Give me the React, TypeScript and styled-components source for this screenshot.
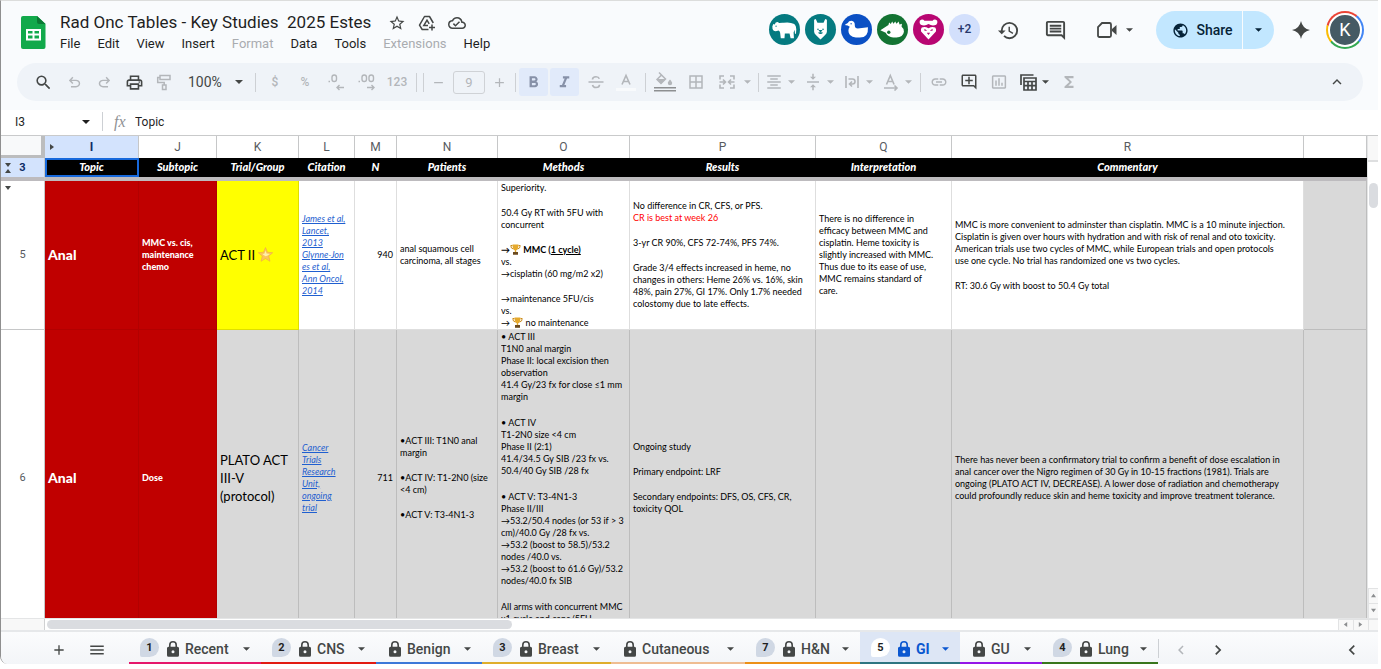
import React from "react";
import styled, { createGlobalStyle, css } from "styled-components";
import {
  MdStarBorder, MdOutlineCloudDone, MdHistory, MdOutlineComment,
  MdPublic, MdSearch, MdOutlinePrint, MdFormatBold, MdFormatItalic, MdBorderAll,
  MdFormatAlignCenter, MdVerticalAlignCenter, MdLink, MdOutlineAddComment,
  MdInsertChartOutlined, MdFunctions, MdAdd, MdRemove, MdMenu,
  MdChevronLeft, MdChevronRight, MdKeyboardArrowUp,
} from "react-icons/md";

const UI = `Roboto, "Liberation Sans", sans-serif`;
const SHEET = `Lato, "Open Sans", "DejaVu Sans", sans-serif`;
const INK = "#444746";
const FAINT = "#b3b6ba";

const GlobalStyle = createGlobalStyle`
  *, *::before, *::after { box-sizing: border-box; }
  body { margin: 0; background: #fff; font-family: ${UI}; color: #1f1f1f; }
  button, input, select { font: inherit; color: inherit; border: 0; padding: 0; margin: 0; background: none; border-radius: 0; outline: 0; }
  svg { display: block; flex: none; }
`;

/* ---------- frame ---------- */

const Page = styled.div`
  height: 100vh;
  padding: 0 3px 5px 0;
`;
const Window = styled.div`
  height: 100%;
  display: flex;
  flex-direction: column;
  overflow: hidden;
  border-left: 1px solid #8f8f8f;
  border-top: 1px solid #dcdddc;
  border-bottom-left-radius: 8px;
  background: #f9fbfd;
`;

/* ---------- title bar ---------- */

const TitleBar = styled.header`
  flex: none;
  height: 62px;
  display: flex;
  align-items: flex-start;
  padding: 10px 14px 0 20px;
`;
const Logo = styled.a`
  display: block;
  margin-top: 5px;
`;
const TitleBlock = styled.div`
  flex: 1;
  margin-left: 6px;
`;
const TitleRow = styled.div`
  display: flex;
  align-items: center;
  height: 23px;
  padding-left: 8px;
`;
const Title = styled.h1`
  margin: 0 11px 0 0;
  font: 400 17px/23px ${UI};
  white-space: pre;
`;
const TitleIcon = styled.button`
  width: 30px;
  display: flex;
  justify-content: center;
  color: ${INK};
`;
const MenuRow = styled.nav`
  display: flex;
  gap: 1px;
  height: 20px;
`;
const MenuItem = styled.button<{ $off?: boolean }>`
  padding: 0 8px;
  font: 400 13px/20px ${UI};
  color: ${(p) => (p.$off ? "#a9acb0" : "#1f1f1f")};
`;
const Viewers = styled.div`
  display: flex;
  gap: 5px;
  padding-top: 3px;
`;
const Viewer = styled.span<{ $bg: string }>`
  width: 31px;
  height: 31px;
  border-radius: 50%;
  overflow: hidden;
  background: ${(p) => p.$bg};
  font: 500 12px/31px ${UI};
  text-align: center;
  color: #27376b;
`;
const HeadTools = styled.div`
  display: flex;
  padding: 0 6px 0 5px;
`;
const HeadButton = styled.button<{ $w: number }>`
  width: ${(p) => p.$w}px;
  height: 38px;
  display: flex;
  align-items: center;
  justify-content: center;
  gap: 9px;
  color: ${INK};
`;
const ShareGroup = styled.div`
  display: flex;
  gap: 1px;
  height: 38px;
  border-radius: 19px;
  overflow: hidden;
  margin-right: 9px;
`;
const ShareButton = styled.button<{ $w: number }>`
  width: ${(p) => p.$w}px;
  display: flex;
  align-items: center;
  justify-content: center;
  gap: 7px;
  background: #c2e7ff;
  color: #062338;
  font: 500 14px/20px ${UI};
  &:first-child { padding-left: 7px; }
`;
const Profile = styled.button`
  width: 38px;
  height: 38px;
  margin-left: 8px;
  display: grid;
  place-items: center;
  border-radius: 50%;
  background: conic-gradient(from 315deg, #ea4335 0 85deg, #4285f4 85deg 175deg, #34a853 175deg 275deg, #fbbc04 275deg 330deg, #ea4335 330deg);
`;
const ProfileFace = styled.span`
  width: 34px;
  height: 34px;
  border: 2px solid #fff;
  border-radius: 50%;
  background: #455a64;
  color: #fff;
  font: 400 18px/30px ${UI};
`;

/* ---------- tool bar ---------- */

const ToolBar = styled.div`
  flex: none;
  height: 38px;
  margin: 0 15px 9px 16px;
  padding: 0 11px 0 10px;
  display: flex;
  align-items: center;
  border-radius: 19px;
  background: #eff3f8;
`;
const Tool = styled.button<{ $w?: number; $on?: boolean; $dark?: boolean; $gap?: number }>`
  width: ${(p) => p.$w ?? 30}px;
  height: 28px;
  flex: none;
  display: flex;
  align-items: center;
  justify-content: center;
  gap: ${(p) => p.$gap ?? 5}px;
  border-radius: 3px;
  color: ${(p) => (p.$dark ? INK : FAINT)};
  font: 500 12px/16px ${UI};
  ${(p) => p.$on && css`
    width: 29px;
    margin-right: 2px;
    background: #e1eafa;
    color: #8791a8;
  `}
`;
const Divider = styled.span<{ $l: number; $r: number }>`
  width: 1px;
  height: 19px;
  flex: none;
  margin: 0 ${(p) => p.$r}px 0 ${(p) => p.$l}px;
  background: #cdd0d4;
`;
const ZoomBox = styled.label`
  position: relative;
  width: 68px;
  flex: none;
  color: ${INK};
`;
const ZoomSelect = styled.select`
  appearance: none;
  width: 100%;
  padding-left: 9px;
  font: 400 14px/20px ${UI};
`;
const ZoomCaret = styled.span`
  position: absolute;
  right: 4px;
  top: 8px;
  pointer-events: none;
`;
const SizeInput = styled.input`
  width: 32px;
  height: 23px;
  flex: none;
  border: 1px solid #cfd2d6;
  border-radius: 3px;
  text-align: center;
  color: ${FAINT};
  font: 400 13px/20px ${UI};
`;
const Spring = styled.span`
  flex: 1;
`;

/* ---------- formula bar ---------- */

const FormulaBar = styled.div`
  flex: none;
  height: 26px;
  padding-bottom: 2px;
  display: flex;
  align-items: center;
  background: #fff;
  border-bottom: 1px solid #c9cacb;
`;
const NameInput = styled.input`
  width: 67px;
  margin-left: 14px;
  font: 400 12px/16px ${UI};
`;
const Fx = styled.span`
  width: 32px;
  padding-left: 11px;
  font: italic 400 16px/20px "Liberation Serif", serif;
  color: #8f9194;
`;
const FormulaInput = styled.input`
  flex: 1;
  font: 400 12px/16px ${UI};
`;

/* ---------- grid ---------- */

const GridArea = styled.div`
  flex: 1;
  min-height: 0;
  display: flex;
  background: #fff;
`;
const GridView = styled.div`
  flex: 1;
  min-width: 0;
  overflow: hidden;
`;
const Sheet = styled.table`
  width: 100%;
  table-layout: fixed;
  border-collapse: separate;
  border-spacing: 0;
`;
const Corner = styled.td`
  height: 22px;
  padding: 0;
  background: #f8f9fa;
  border: solid #bcbdbe;
  border-width: 0 4px 3px 0;
`;
const ColHead = styled.th<{ $on?: boolean }>`
  position: relative;
  height: 22px;
  padding: 0;
  border-right: 1px solid #c6c7c8;
  background: ${(p) => (p.$on ? "#d3e3fd" : "#fff")};
  color: ${(p) => (p.$on ? "#0b2a66" : "#575b5f")};
  font: ${(p) => (p.$on ? 700 : 400)} 12px/16px ${UI};
`;
const RowHead = styled.th<{ $on?: boolean }>`
  position: relative;
  padding: 0;
  border-right: 1px solid #c6c7c8;
  border-bottom: ${(p) => (p.$on ? "4px solid #bdbbbe" : "1px solid #c6c7c8")};
  background: ${(p) => (p.$on ? "#d3e3fd" : "#fff")};
  color: ${(p) => (p.$on ? "#0b2a66" : "#575b5f")};
  font: ${(p) => (p.$on ? 700 : 400)} 11px/16px ${UI};
`;
const GroupMark = styled.span<{ $top: number; $left: number }>`
  position: absolute;
  left: ${(p) => p.$left}px;
  top: ${(p) => p.$top}px;
  color: ${INK};
`;
const Field = styled.th<{ $picked?: boolean }>`
  height: 23px;
  padding: 0 1px 1px 0;
  background: #000;
  color: #fff;
  border-bottom: 4px solid #bdbbbe;
  font: italic 900 11px/12px ${SHEET};
  white-space: nowrap;
  ${(p) => p.$picked && css`
    box-shadow: inset 0 0 0 2px #1769dc;
  `}
`;
const Cell = styled.td<{ $h: number; $bg: string; $align?: string; $rule?: string }>`
  height: ${(p) => p.$h}px;
  padding: 0 3px;
  vertical-align: middle;
  text-align: ${(p) => p.$align ?? "left"};
  background: ${(p) => p.$bg};
  border: solid rgba(0, 0, 0, 0.13);
  border-width: 0 1px 1px 0;
  border-color: ${(p) => p.$rule};
  color: #000;
  font: 400 9px/12px ${SHEET};
  white-space: pre;
`;
const Para = styled.p`
  margin: 0;
  & + & { margin-top: 13px; }
`;
const Clip = styled.div<{ $h: number; $gap: number }>`
  height: ${(p) => p.$h}px;
  padding-top: 1px;
  overflow: hidden;
  ${Para} + ${Para} { margin-top: ${(p) => p.$gap}px; }
`;
const Topic = styled.strong`
  color: #fff;
  font: 900 14px/18px ${SHEET};
`;
const Subtopic = styled.strong`
  color: #fff;
  font: 900 9px/12px ${SHEET};
`;
const Trial = styled.span`
  display: block;
  color: #000;
  font: 400 13px/18px ${SHEET};
`;
const Cite = styled.a`
  color: #1f5fd0;
  font-style: italic;
  text-decoration: underline;
`;
const Red = styled.span`
  color: #f00;
`;
const Emoji = styled.svg`
  display: inline-block;
  vertical-align: -2px;
`;

/* ---------- scroll bars ---------- */

const VScroll = styled.div`
  width: 11px;
  flex: none;
  display: flex;
  flex-direction: column;
  border-left: 1px solid #e4e5e6;
`;
const VHead = styled.div`
  height: 26px;
  background: #f8f8f8;
  border-bottom: 2px solid #dedfe0;
`;
const VTrack = styled.div`
  flex: 1;
  padding: 21px 0 0 1px;
`;
const VThumb = styled.div`
  width: 9px;
  height: 25px;
  border-radius: 5px;
  background: #dadce0;
`;
const ScrollButton = styled.button<{ $w: number; $h: number }>`
  width: ${(p) => p.$w}px;
  height: ${(p) => p.$h}px;
  display: grid;
  place-items: center;
  background: #f8f8f8;
  box-shadow: inset 1px 1px 0 #e2e3e4;
  color: #8c8e90;
`;
const HScroll = styled.div`
  flex: none;
  height: 14px;
  display: flex;
  background: #fff;
  border-top: 1px solid #e4e5e6;
  border-bottom: 2px solid #e6e8ea;
`;
const HHead = styled.div`
  width: 44px;
  background: #f8f8f8;
  border-right: 1px solid #d0d1d2;
`;
const HTrack = styled.div`
  flex: 1;
  padding: 1px 0 0 2px;
`;
const HThumb = styled.div`
  width: 36%;
  height: 9px;
  border-radius: 5px;
  background: #dadce0;
`;

/* ---------- sheet tabs ---------- */

const TabBar = styled.footer`
  flex: none;
  height: 32px;
  display: flex;
  align-items: stretch;
  padding-left: 38px;
  background: linear-gradient(#fbfcfd, #f3f5f8);
`;
const TabList = styled.div`
  display: flex;
  margin-left: 14px;
`;
const BarButton = styled.button<{ $w: number; $off?: boolean }>`
  width: ${(p) => p.$w}px;
  flex: none;
  display: grid;
  place-items: center;
  padding-top: 3px;
  color: ${(p) => (p.$off ? FAINT : INK)};
`;
const Tab = styled.button<{ $w: number; $line: string; $on?: boolean }>`
  width: ${(p) => p.$w}px;
  flex: none;
  display: flex;
  align-items: center;
  padding: 4px 11px 0;
  border-bottom: 2px solid ${(p) => p.$line};
  background: ${(p) => (p.$on ? "#dde6f5" : "transparent")};
  color: ${(p) => (p.$on ? "#0b57d0" : INK)};
  font: ${(p) => (p.$on ? 700 : 500)} 14px/20px ${UI};
`;
const Badge = styled.span<{ $on?: boolean }>`
  width: 19px;
  height: 19px;
  margin: 0 6px 3px 0;
  border-radius: 10px 10px 10px 2px;
  background: ${(p) => (p.$on ? "#fff" : "#d0d8e4")};
  color: #1f1f1f;
  font: 700 11px/19px ${UI};
  text-align: center;
`;
const TabLabel = styled.span`
  flex: 1;
  margin-left: 4px;
  text-align: left;
`;
const TabEnd = styled.span`
  width: 1px;
  height: 19px;
  margin: 7px 6px 0 0;
  background: #cdd0d4;
`;

/* ---------- drawings ---------- */

const Caret = ({ w = 8 }: { w?: number }) => (
  <svg width={w} height="4" viewBox="0 0 8 4" aria-hidden="true"><path d="M0 0h8L4 4z" fill="currentColor" /></svg>
);
const Arrow = ({ dir, size = 6 }: { dir: "up" | "down" | "left" | "right"; size?: number }) => {
  const d = { up: "M0 5h6L3 1z", down: "M0 1h6L3 5z", left: "M5 0v6L1 3z", right: "M1 0v6l4-3z" }[dir];
  return <svg width={size} height={size} viewBox="0 0 6 6" aria-hidden="true"><path d={d} fill="currentColor" /></svg>;
};
const Symbol = ({ d, size = 17 }: { d: string; size?: number }) => (
  <svg width={size} height={size} viewBox="0 -960 960 960" fill="currentColor" aria-hidden="true"><path d={d} /></svg>
);
const UNDO = "M280-200v-80h284q63 0 109.500-40T720-420q0-60-46.500-100T564-560H312l104 104-56 56-200-200 200-200 56 56-104 104h252q97 0 169.500 63T800-420q0 94-72.500 157T564-200H280Z";
const REDO = "M396-200q-97 0-169.500-63T154-420q0-94 72.500-157T396-640h252L544-744l56-56 200 200-200 200-56-56 104-104H396q-63 0-109.500 40T240-420q0 60 46.500 100T396-280h284v80H396Z";

const Stroke = ({ children, w = 18, sw = 1.6 }: { children: React.ReactNode; w?: number; sw?: number }) => (
  <svg width={w} height="18" viewBox={`0 0 ${w} 18`} fill="none" stroke="currentColor" strokeWidth={sw} aria-hidden="true">{children}</svg>
);
const DriveAddIcon = () => (
  <Stroke sw={1.5}>
    <path d="M10.500 15.500H4.200L1.500 11.200 6.500 2.500h5l3.800 6.500" strokeLinejoin="round" />
    <path d="M10 11.500H5.800L9 6.200l2.200 3.600M14 10.500v6M11 13.500h6" />
  </Stroke>
);
const PaintIcon = () => (
  <Stroke sw={1.5}><path d="M5 2.500h10v4H5zM5 4.500H2.700v5h6.500V12M7.500 12h3.500v4.500H7.500z" /></Stroke>
);
const LessDecimals = () => (
  <Stroke sw={1.4}><path d="M10 14.500h7M12.500 12l-2.500 2.500 2.500 2.500M1.500 8.500h1.500" /><rect x="5" y="2" width="4.500" height="6.500" rx="2.200" /></Stroke>
);
const MoreDecimals = () => (
  <Stroke sw={1.4}><path d="M9 14.500h7M13.500 12l2.500 2.500-2.500 2.500M0.500 8.500H2" /><rect x="4" y="2" width="4.500" height="6.500" rx="2.200" /><rect x="11" y="2" width="4.500" height="6.500" rx="2.200" /></Stroke>
);
const StrikeIcon = () => (
  <Stroke sw={1.6}><path d="M1.500 9h15M5.500 6.500Q5.500 3.800 9 3.800q2.600 0 3.300 2M5.500 12q.6 2.500 3.500 2.500 3.500 0 3.500-2.700" /></Stroke>
);
const TextColor = () => (
  <svg width="22" height="22" viewBox="0 0 22 22" aria-hidden="true">
    <path d="M7 13.500l4-9 4 9M8.400 10.500h5.200" fill="none" stroke="currentColor" strokeWidth="1.600" />
    <path d="M1 17h20v3H1z" fill="#f8fafc" />
  </svg>
);
const FillColor = () => (
  <svg width="24" height="22" viewBox="0 0 24 22" aria-hidden="true">
    <path d="M6 1.500l6.500 6.500-4.500 4.500L4 8.500 8.500 4" fill="none" stroke="currentColor" strokeWidth="1.500" />
    <path d="M4 8h8.500L8 12.500zM17 8.500s2.200 2.400 2.200 3.500a2.200 2.200 0 0 1-4.400 0C14.800 10.900 17 8.500 17 8.500z" fill="currentColor" />
    <path d="M1 16h22v1.500H1zM1 19h22v1.500H1z" fill="#8d8f91" />
  </svg>
);
const MergeIcon = () => (
  <Stroke><path d="M6 3H2v3.500M6 15H2v-3.500M12 3h4v3.500M12 15h4v-3.500M1.500 9H7M16.500 9H11M5 6.500L7.500 9 5 11.500M13 6.500L10.500 9l2.500 2.500" /></Stroke>
);
const WrapIcon = () => (
  <Stroke><path d="M3 3v12M15 3v12M5.500 6h4a2.500 2.500 0 0 1 0 5H7M9 8.500L6.500 11 9 13.500" /></Stroke>
);
const RotateIcon = () => (
  <Stroke><path d="M4.500 11.500l3.800-9 3.800 9M6 8.500h4.600M2 15h13M12.500 12.500L15 15l-2.500 2.500" /></Stroke>
);
const TableIcon = () => (
  <Stroke sw={1.7}><path d="M2 12V2h12.500M5 5h12v12H5zM5 8.500h12M9 8.500V17M13 8.500V17M5 12.700h12" /></Stroke>
);
const VideoIcon = () => (
  <svg width="20" height="18" viewBox="0 0 20 18" aria-hidden="true">
    <path d="M5 2h7.500Q14 2 14 3.500v11q0 1.500-1.500 1.500h-10Q1 16 1 14.500V6z" fill="none" stroke="currentColor" strokeWidth="1.800" />
    <path d="M15 8l4.500-4v10L15 10z" fill="currentColor" />
  </svg>
);
const LockIcon = () => (
  <svg width="16" height="18" viewBox="0 0 16 18" aria-hidden="true">
    <path d="M4.800 8V5a3.200 3.200 0 0 1 6.400 0v3" fill="none" stroke="currentColor" strokeWidth="1.600" />
    <path d="M3.500 6.800h9a1.500 1.500 0 0 1 1.500 1.500v7a1.500 1.500 0 0 1-1.500 1.500h-9A1.500 1.500 0 0 1 2 15.300v-7a1.500 1.500 0 0 1 1.500-1.500zM8 10.300a1.500 1.500 0 1 0 0 3 1.500 1.500 0 0 0 0-3z" fill="currentColor" fillRule="evenodd" />
  </svg>
);
const Sparkle = () => (
  <svg width="18" height="18" viewBox="0 0 18 18" aria-hidden="true"><path d="M9 0q1.500 7.500 9 9-7.500 1.500-9 9-1.500-7.500-9-9 7.500-1.500 9-9z" fill="currentColor" /></svg>
);
const SheetsLogo = () => (
  <svg width="25" height="33" viewBox="0 0 25 33" aria-hidden="true">
    <path d="M2 0h14l8.500 8v23a2 2 0 0 1-2 2H2a2 2 0 0 1-2-2V2a2 2 0 0 1 2-2z" fill="#12a94b" />
    <path d="M16 0l8.500 8H18a2 2 0 0 1-2-2z" fill="#0a7a34" />
    <path d="M5 13h15v11.500H5zM7 15v2.500h4.500V15zm6.500 0v2.500H18V15zM7 19.500v3h4.500v-3zm6.500 0v3H18v-3z" fill="#fff" fillRule="evenodd" />
  </svg>
);
const Star = () => (
  <Emoji width="15" height="15" viewBox="0 0 15 15" role="img" aria-label="star">
    <path d="M7.500 0.500l2 4.800 5.200.4-4 3.400 1.300 5.200-4.500-2.800L3 14.300l1.300-5.200-4-3.400 5.200-.4z" fill="#fbc65a" stroke="#f0a848" strokeWidth=".6" />
    <path d="M7.500 3.500l1 3 3.300.4-2.600 1.800-1.700.6-3-2 2-.9z" fill="#fff0a8" />
  </Emoji>
);
const Trophy = () => (
  <Emoji width="11" height="11" viewBox="0 0 11 11" role="img" aria-label="trophy">
    <path d="M2.500 1.500H.8q0 3.200 2.500 3.500M8.500 1.500h1.700q0 3.200-2.500 3.500" fill="none" stroke="#c98a1b" />
    <path d="M2.500.5h6q0 5-2.300 5.800V8H4.800V6.300Q2.500 5.500 2.500.5z" fill="#e5a92c" />
    <path d="M3 8h5v2.800H3z" fill="#6b4a1e" />
  </Emoji>
);

const animals = [
  { name: "Anonymous hippo", bg: "#057a80", art: <><path fill="#fff" d="M10 36l3-6 4 1 3-6 6-1 4 3q8-2 14-1 18-3 31 4 6 5 6 15l-1 14-3-1-1-11-3 8 1 17H64l-3-14H47l-1 14H35l-2-16q-1-6-5-7-8 4-14 1-5-5-4-14z" /><circle cx="21" cy="36" r="2" fill="#057a80" /></> },
  { name: "Anonymous llama", bg: "#057a80", art: <><path fill="#fff" d="M27 17l5-2 5 11h18l5-11 5 2v36q0 6-6 10L46 76 33 63q-6-4-6-10z" /><path d="M36 45h5M51 45h5M43 49h6l-3 4zM40 55q6 5 12 0" stroke="#057a80" strokeWidth="3" fill="#057a80" /></> },
  { name: "Anonymous duck", bg: "#0b50c4", art: <><path fill="#fff" d="M11 33q6-5 9-6 3-7 11-7 11 2 10 14 0 9 9 9l30-4q2 31-24 31H44q-22-2-22-20 0-7 4-12-5-4-15-5z" /><circle cx="30" cy="29" r="2" fill="#0b50c4" /></> },
  { name: "Anonymous hedgehog", bg: "#137333", art: <><path fill="#fff" d="M10 48l24-15 2-8 5 5 4-8 4 7 5-7 4 7 6-7 3 9 7-2-1 9q8 6 7 15-3 17-22 17H48q-16-1-22-14z" /><circle cx="35" cy="54" r="5" fill="#137333" /></> },
  { name: "Anonymous raccoon", bg: "#b80672", art: <path fill="#fff" fillRule="evenodd" d="M20 20q8-7 14 0h24q6-7 14 0 2 8-3 12-12 5-23-2-11 7-23 2-5-4-3-12zM26 40q10-3 20 2 10-5 20-2 4 5 2 12L46 76 24 52q-2-7 2-12zM34 44l8 6h-8zM58 44l-8 6h8zM41 56h10l-5 6z" /> },
];

/* ---------- data ---------- */

const columns: [string, string, number][] = [
  ["I", "Topic", 94], ["J", "Subtopic", 78], ["K", "Trial/Group", 82], ["L", "Citation", 56],
  ["M", "N", 42], ["N", "Patients", 101], ["O", "Methods", 132], ["P", "Results", 186],
  ["Q", "Interpretation", 136], ["R", "Commentary", 352],
];
const menus = ["File", "Edit", "View", "Insert", "Format", "Data", "Tools", "Extensions", "Help"];
const tabs: { name: string; w: number; line: string; badge?: string; on?: boolean }[] = [
  { name: "Recent", w: 132, line: "#e5176b", badge: "1" },
  { name: "CNS", w: 115, line: "#e21b12", badge: "2" },
  { name: "Benign", w: 106, line: "#3c78d8" },
  { name: "Breast", w: 129, line: "#dfae2c", badge: "3" },
  { name: "Cutaneous", w: 134, line: "#efbd92" },
  { name: "H&N", w: 115, line: "#ec9017", badge: "7" },
  { name: "GI", w: 100, line: "#2d7581", badge: "5", on: true },
  { name: "GU", w: 82, line: "#9416e8" },
  { name: "Lung", w: 116, line: "#38761d", badge: "4" },
];

const RED = "#c00000";
const RED_RULE = "rgba(0, 0, 0, 0.07)";
const GREY = "#d9d9d9";
const ROW5 = 149;
const ROW6 = 296;

export default function App() {
  return (
    <Page>
      <GlobalStyle />
      <Window>
        <TitleBar>
          <Logo href="#home" aria-label="Sheets home"><SheetsLogo /></Logo>
          <TitleBlock>
            <TitleRow>
              <Title>{"Rad Onc Tables - Key Studies  2025 Estes"}</Title>
              <TitleIcon aria-label="Star"><MdStarBorder size={18} /></TitleIcon>
              <TitleIcon aria-label="Add shortcut to Drive"><DriveAddIcon /></TitleIcon>
              <TitleIcon aria-label="Document status"><MdOutlineCloudDone size={18} /></TitleIcon>
            </TitleRow>
            <MenuRow>
              {menus.map((m) => (
                <MenuItem key={m} $off={m === "Format" || m === "Extensions"}>{m}</MenuItem>
              ))}
            </MenuRow>
          </TitleBlock>
          <Viewers>
            {animals.map((a) => (
              <Viewer key={a.name} $bg={a.bg} title={a.name}>
                <svg width="31" height="31" viewBox="0 0 92 92">{a.art}</svg>
              </Viewer>
            ))}
            <Viewer $bg="#d3e0fc">+2</Viewer>
          </Viewers>
          <HeadTools>
            <HeadButton $w={46} aria-label="Version history"><MdHistory size={23} /></HeadButton>
            <HeadButton $w={48} aria-label="Comments"><MdOutlineComment size={23} /></HeadButton>
            <HeadButton $w={71} aria-label="Join a call"><VideoIcon /><Caret w={7} /></HeadButton>
          </HeadTools>
          <ShareGroup>
            <ShareButton $w={86}><MdPublic size={17} />Share</ShareButton>
            <ShareButton $w={31} aria-label="Share options"><Caret w={7} /></ShareButton>
          </ShareGroup>
          <HeadButton $w={35} aria-label="Ask Gemini"><Sparkle /></HeadButton>
          <Profile aria-label="Account"><ProfileFace>K</ProfileFace></Profile>
        </TitleBar>

        <ToolBar role="toolbar">
          <Tool $w={32} $dark aria-label="Search the menus"><MdSearch size={19} /></Tool>
          <Tool aria-label="Undo"><Symbol d={UNDO} /></Tool>
          <Tool aria-label="Redo"><Symbol d={REDO} /></Tool>
          <Tool $dark aria-label="Print"><MdOutlinePrint size={19} /></Tool>
          <Tool aria-label="Paint format"><PaintIcon /></Tool>
          <ZoomBox aria-label="Zoom">
            <ZoomSelect defaultValue="100%"><option>100%</option></ZoomSelect>
            <ZoomCaret><Caret /></ZoomCaret>
          </ZoomBox>
          <Divider $l={8} $r={4} />
          <Tool>$</Tool>
          <Tool>%</Tool>
          <Tool $w={31} aria-label="Decrease decimal places"><LessDecimals /></Tool>
          <Tool $w={31} aria-label="Increase decimal places"><MoreDecimals /></Tool>
          <Tool>123</Tool>
          <Divider $l={4} $r={3} />
          <Divider $l={3} $r={0} />
          <Tool $w={29} aria-label="Decrease font size"><MdRemove size={15} /></Tool>
          <SizeInput defaultValue="9" aria-label="Font size" />
          <Tool $w={29} aria-label="Increase font size"><MdAdd size={15} /></Tool>
          <Divider $l={1} $r={3} />
          <Tool $on aria-label="Bold"><MdFormatBold size={19} /></Tool>
          <Tool $on aria-label="Italic"><MdFormatItalic size={19} /></Tool>
          <Tool $w={29} aria-label="Strikethrough"><StrikeIcon /></Tool>
          <Tool $w={31} aria-label="Text color"><TextColor /></Tool>
          <Divider $l={4} $r={3} />
          <Tool $w={31} aria-label="Fill color"><FillColor /></Tool>
          <Tool $w={32} aria-label="Borders"><MdBorderAll size={18} /></Tool>
          <Tool $w={44} $gap={8} aria-label="Merge cells"><MergeIcon /><Caret w={7} /></Tool>
          <Divider $l={2} $r={1} />
          <Tool $w={39} aria-label="Horizontal align"><MdFormatAlignCenter size={18} /><Caret w={7} /></Tool>
          <Tool $w={39} aria-label="Vertical align"><MdVerticalAlignCenter size={18} /><Caret w={7} /></Tool>
          <Tool $w={39} aria-label="Text wrapping"><WrapIcon /><Caret w={7} /></Tool>
          <Tool $w={39} aria-label="Text rotation"><RotateIcon /><Caret w={7} /></Tool>
          <Divider $l={4} $r={3} />
          <Tool aria-label="Insert link"><MdLink size={18} /></Tool>
          <Tool $dark aria-label="Insert comment"><MdOutlineAddComment size={18} /></Tool>
          <Tool aria-label="Insert chart"><MdInsertChartOutlined size={18} /></Tool>
          <Tool $w={40} $dark aria-label="Filter views"><TableIcon /><Caret w={7} /></Tool>
          <Tool aria-label="Functions"><MdFunctions size={18} /></Tool>
          <Spring />
          <Tool $dark aria-label="Hide the menus"><MdKeyboardArrowUp size={18} /></Tool>
        </ToolBar>

        <FormulaBar>
          <NameInput defaultValue="I3" aria-label="Name box" />
          <Caret />
          <Divider $l={12} $r={0} />
          <Fx>fx</Fx>
          <FormulaInput defaultValue="Topic" aria-label="Formula" />
        </FormulaBar>

        <GridArea>
          <GridView>
            <Sheet>
              <colgroup>
                <col style={{ width: 44 }} />
                {columns.map(([id, , w]) => <col key={id} style={{ width: w }} />)}
                <col />
              </colgroup>
              <thead>
                <tr>
                  <Corner />
                  {columns.map(([id], i) => (
                    <ColHead key={id} $on={i === 0}>
                      {i === 0 && <GroupMark $left={4} $top={8}><Arrow dir="right" /></GroupMark>}
                      {id}
                    </ColHead>
                  ))}
                  <ColHead />
                </tr>
                <tr>
                  <RowHead $on>
                    <GroupMark $left={4} $top={4}><Arrow dir="down" /><Arrow dir="up" /></GroupMark>
                    3
                  </RowHead>
                  {columns.map(([id, name], i) => <Field key={id} $picked={i === 0}>{name}</Field>)}
                  <Field />
                </tr>
              </thead>
              <tbody>
                <tr>
                  <RowHead>
                    <GroupMark $left={4} $top={4}><Arrow dir="down" /></GroupMark>
                    5
                  </RowHead>
                  <Cell $h={ROW5} $bg={RED} $rule={RED_RULE}><Topic>Anal</Topic></Cell>
                  <Cell $h={ROW5} $bg={RED} $rule={RED_RULE}><Subtopic>{"MMC vs. cis,\nmaintenance\nchemo"}</Subtopic></Cell>
                  <Cell $h={ROW5} $bg="#ffff00"><Trial>ACT II <Star /></Trial></Cell>
                  <Cell $h={ROW5} $bg="#fff">
                    <Cite href="#james">{"James et al,\nLancet,\n2013"}</Cite>{"\n"}
                    <Cite href="#glynne">{"Glynne-Jon\nes et al,\nAnn Oncol,\n2014"}</Cite>
                  </Cell>
                  <Cell $h={ROW5} $bg="#fff" $align="right">940</Cell>
                  <Cell $h={ROW5} $bg="#fff">{"anal squamous cell\ncarcinoma, all stages"}</Cell>
                  <Cell $h={ROW5} $bg="#fff">
                    <Clip $h={148} $gap={13}>
                      <Para>Superiority.</Para>
                      <Para>{"50.4 Gy RT with 5FU with\nconcurrent"}</Para>
                      <Para>
                        <b>→<Trophy /> MMC (<u>1 cycle)</u></b>{"\nvs.\n→cisplatin (60 mg/m2 x2)"}
                      </Para>
                      <Para>{"→maintenance 5FU/cis\nvs.\n"}{"→ "}<Trophy /> no maintenance</Para>
                    </Clip>
                  </Cell>
                  <Cell $h={ROW5} $bg="#fff">
                    <Para>{"No difference in CR, CFS, or PFS.\n"}<Red>CR is best at week 26</Red></Para>
                    <Para>3-yr CR 90%, CFS 72-74%, PFS 74%.</Para>
                    <Para>{"Grade 3/4 effects increased in heme, no\nchanges in others: Heme 26% vs. 16%, skin\n48%, pain 27%, GI 17%. Only 1.7% needed\ncolostomy due to late effects."}</Para>
                  </Cell>
                  <Cell $h={ROW5} $bg="#fff">{"There is no difference in\nefficacy between MMC and\ncisplatin. Heme toxicity is\nslightly increased with MMC.\nThus due to its ease of use,\nMMC remains standard of\ncare."}</Cell>
                  <Cell $h={ROW5} $bg="#fff">
                    <Para>{"MMC is more convenient to adminster than cisplatin. MMC is a 10 minute injection.\nCisplatin is given over hours with hydration and with risk of renal and oto toxicity.\nAmerican trials use two cycles of MMC, while European trials and open protocols\nuse one cycle. No trial has randomized one vs two cycles."}</Para>
                    <Para>RT: 30.6 Gy with boost to 50.4 Gy total</Para>
                  </Cell>
                  <Cell $h={ROW5} $bg={GREY} />
                </tr>
                <tr>
                  <RowHead>6</RowHead>
                  <Cell $h={ROW6} $bg={RED} $rule={RED_RULE}><Topic>Anal</Topic></Cell>
                  <Cell $h={ROW6} $bg={RED} $rule={RED_RULE}><Subtopic>Dose</Subtopic></Cell>
                  <Cell $h={ROW6} $bg={GREY}><Trial>{"PLATO ACT\nIII-V\n(protocol)"}</Trial></Cell>
                  <Cell $h={ROW6} $bg={GREY}><Cite href="#ctru">{"Cancer\nTrials\nResearch\nUnit,\nongoing\ntrial"}</Cite></Cell>
                  <Cell $h={ROW6} $bg={GREY} $align="right">711</Cell>
                  <Cell $h={ROW6} $bg={GREY}>
                    <Para>{"•ACT III: T1N0 anal\nmargin"}</Para>
                    <Para>{"•ACT IV: T1-2N0 (size\n<4 cm)"}</Para>
                    <Para>•ACT V: T3-4N1-3</Para>
                  </Cell>
                  <Cell $h={ROW6} $bg={GREY}>
                    <Clip $h={295} $gap={14}>
                      <Para>{"• ACT III\nT1N0 anal margin\nPhase II: local excision then\nobservation\n41.4 Gy/23 fx for close ≤1 mm\nmargin"}</Para>
                      <Para>{"• ACT IV\nT1-2N0 size <4 cm\nPhase II (2:1)\n41.4/34.5 Gy SIB /23 fx vs.\n50.4/40 Gy SIB /28 fx"}</Para>
                      <Para>{"• ACT V: T3-4N1-3\nPhase II/III\n→53.2/50.4 nodes (or 53 if > 3\ncm)/40.0 Gy /28 fx vs.\n→53.2 (boost to 58.5)/53.2\nnodes /40.0 vs.\n→53.2 (boost to 61.6 Gy)/53.2\nnodes/40.0 fx SIB"}</Para>
                      <Para>{"All arms with concurrent MMC\nx1 cycle and cape/5FU"}</Para>
                    </Clip>
                  </Cell>
                  <Cell $h={ROW6} $bg={GREY}>
                    <Para>Ongoing study</Para>
                    <Para>Primary endpoint: LRF</Para>
                    <Para>{"Secondary endpoints: DFS, OS, CFS, CR,\ntoxicity QOL"}</Para>
                  </Cell>
                  <Cell $h={ROW6} $bg={GREY} />
                  <Cell $h={ROW6} $bg={GREY}>{"There has never been a confirmatory trial to confirm a benefit of dose escalation in\nanal cancer over the Nigro regimen of 30 Gy in 10-15 fractions (1981). Trials are\nongoing (PLATO ACT IV, DECREASE). A lower dose of radiation and chemotherapy\ncould profoundly reduce skin and heme toxicity and improve treatment tolerance."}</Cell>
                  <Cell $h={ROW6} $bg={GREY} />
                </tr>
              </tbody>
            </Sheet>
          </GridView>
          <VScroll>
            <VHead />
            <VTrack><VThumb /></VTrack>
            <ScrollButton $w={10} $h={15} aria-label="Scroll up"><Arrow dir="up" size={5} /></ScrollButton>
            <ScrollButton $w={10} $h={15} aria-label="Scroll down"><Arrow dir="down" size={5} /></ScrollButton>
          </VScroll>
        </GridArea>
        <HScroll>
          <HHead />
          <HTrack><HThumb /></HTrack>
          <ScrollButton $w={15} $h={11} aria-label="Scroll left"><Arrow dir="left" size={5} /></ScrollButton>
          <ScrollButton $w={15} $h={11} aria-label="Scroll right"><Arrow dir="right" size={5} /></ScrollButton>
          <ScrollButton as="span" $w={10} $h={11} />
        </HScroll>

        <TabBar>
          <BarButton $w={40} aria-label="Add sheet"><MdAdd size={16} /></BarButton>
          <BarButton $w={36} aria-label="All sheets"><MdMenu size={18} /></BarButton>
          <TabList>
            {tabs.map((t) => (
              <Tab key={t.name} $w={t.w} $line={t.line} $on={t.on}>
                {t.badge && <Badge $on={t.on}>{t.badge}</Badge>}
                <LockIcon />
                <TabLabel>{t.name}</TabLabel>
                <Caret w={7} />
              </Tab>
            ))}
          </TabList>
          <TabEnd />
          <BarButton $w={32} $off aria-label="Scroll tabs left"><MdChevronLeft size={18} /></BarButton>
          <BarButton $w={42} aria-label="Scroll tabs right"><MdChevronRight size={20} /></BarButton>
          <Spring />
          <BarButton $w={52} aria-label="Show side panel"><MdChevronLeft size={20} /></BarButton>
        </TabBar>
      </Window>
    </Page>
  );
}
